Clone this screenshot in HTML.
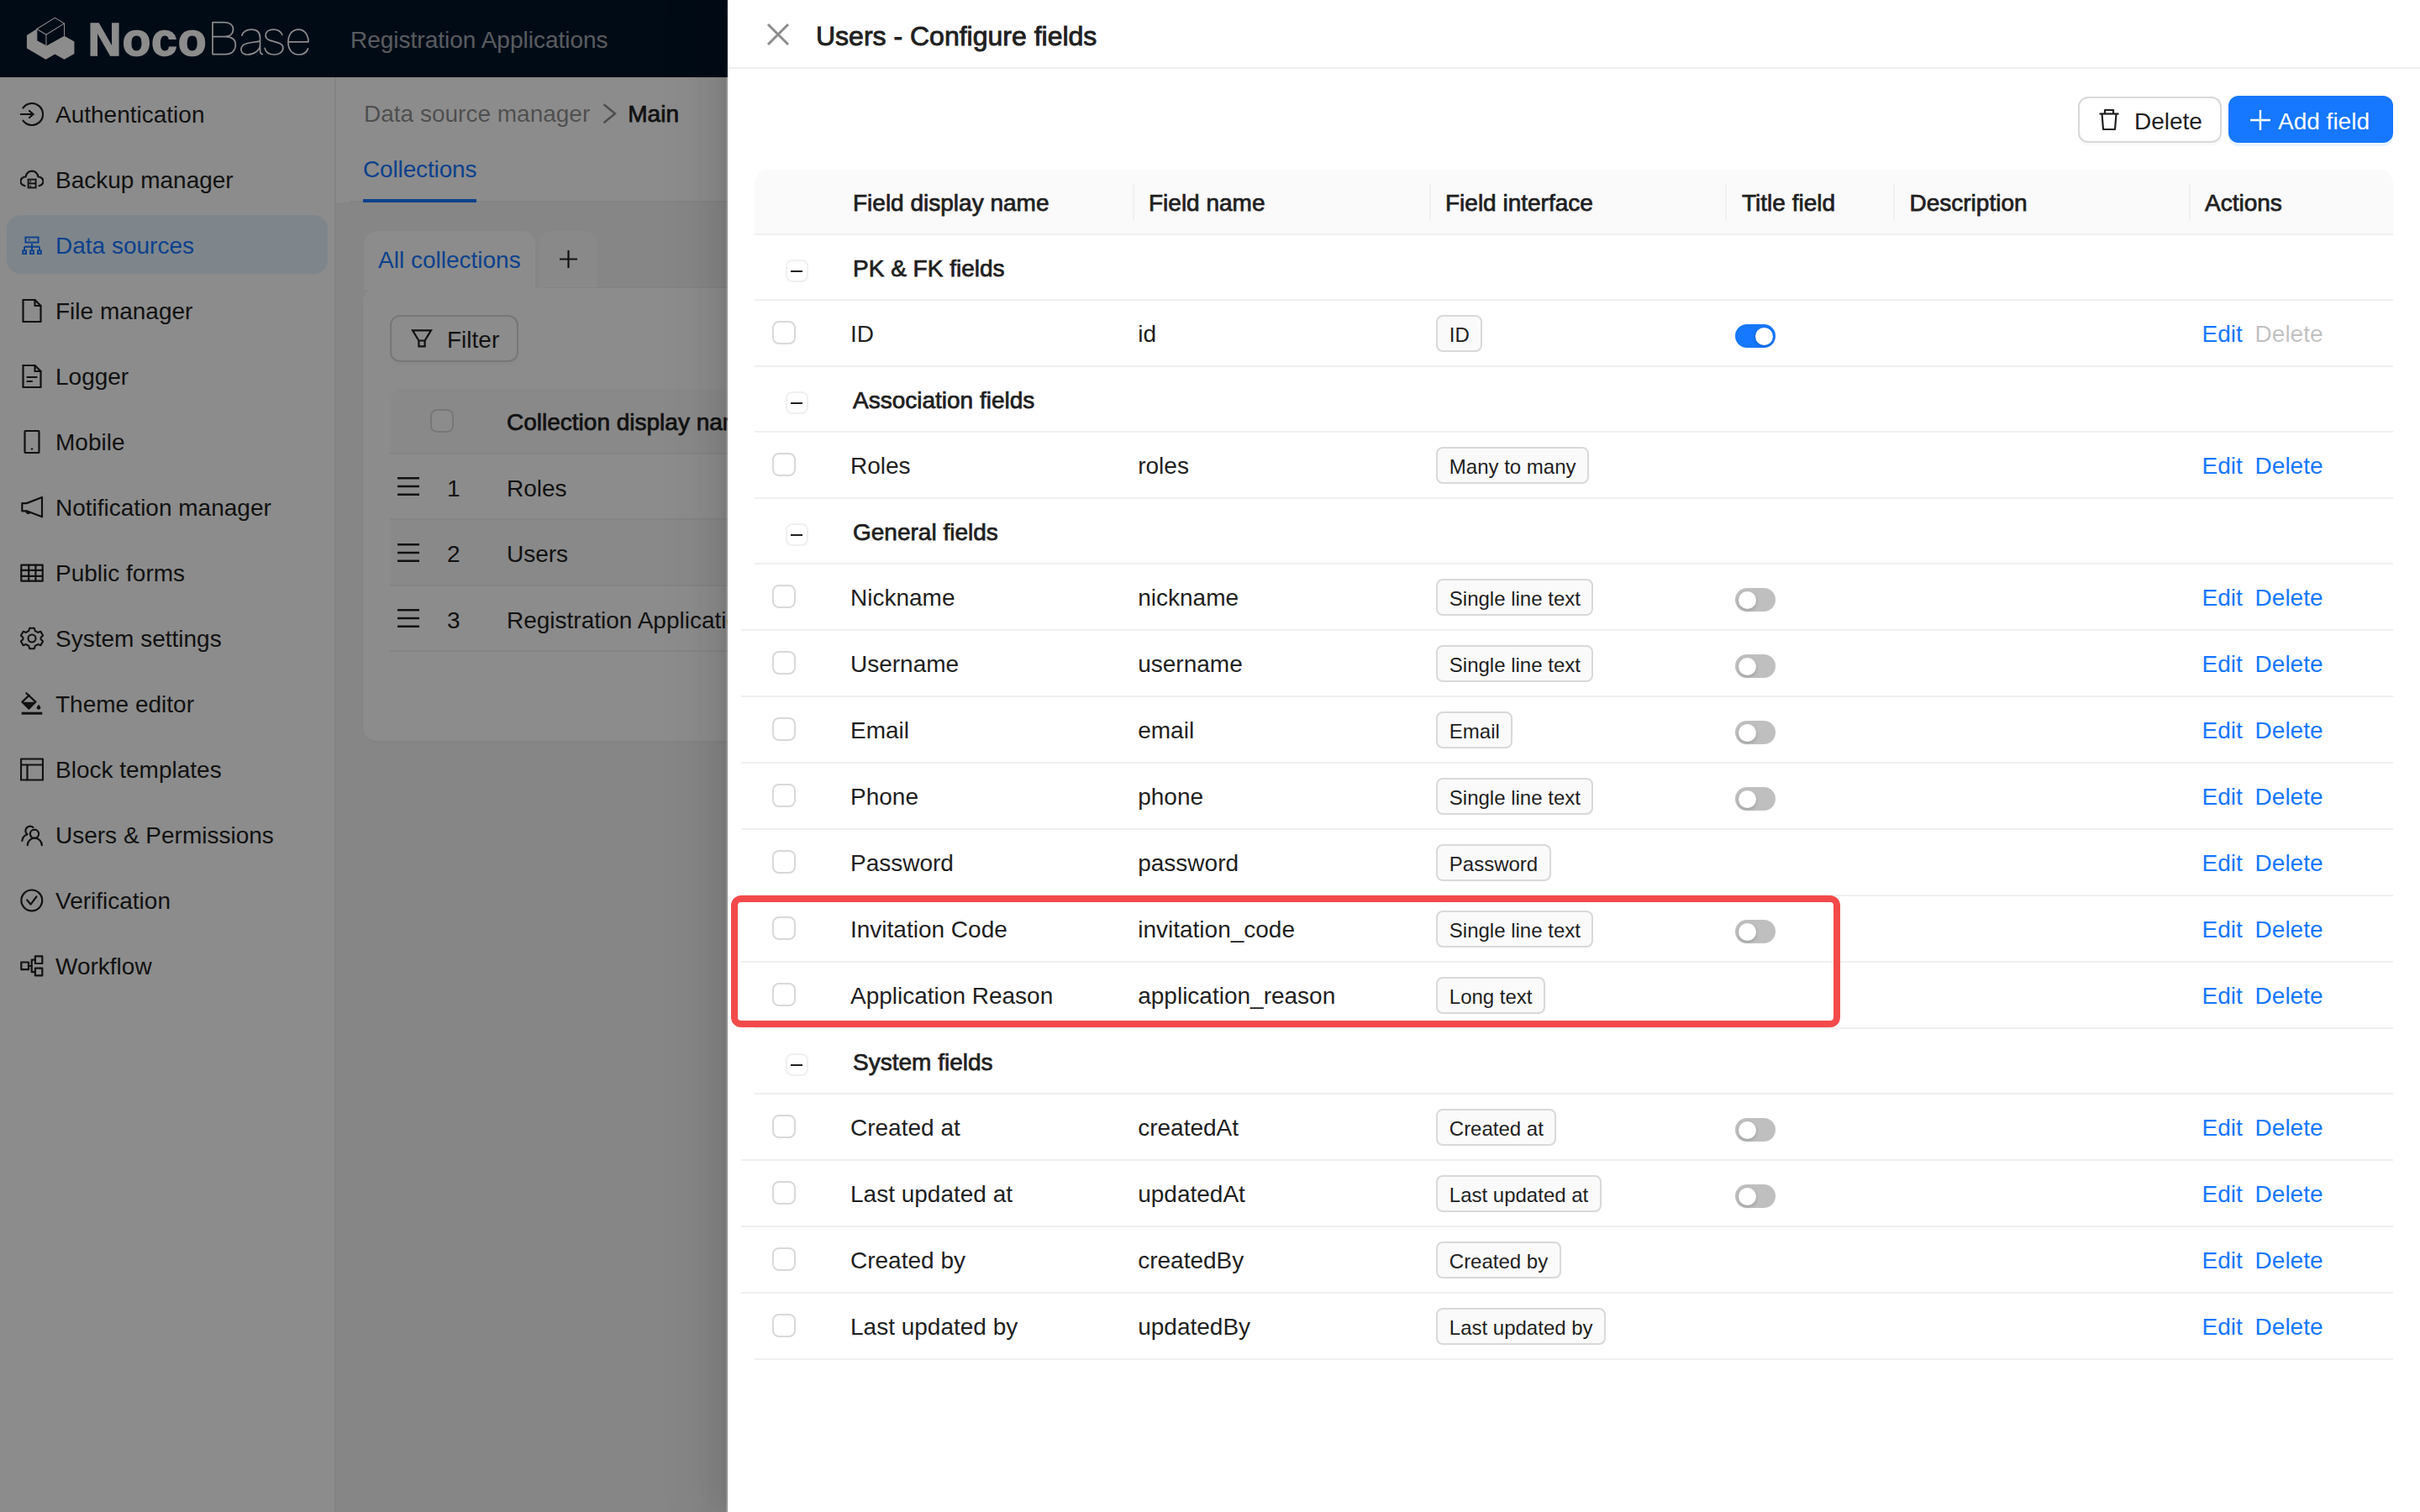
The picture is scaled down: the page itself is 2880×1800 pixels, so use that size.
<!DOCTYPE html>
<html><head><meta charset="utf-8"><title>NocoBase</title>
<style>
html,body{margin:0;padding:0;}
body{width:2880px;height:1800px;position:relative;overflow:hidden;background:#fff;font-family:'Liberation Sans',sans-serif;}
.t{position:absolute;white-space:nowrap;}
.b{position:absolute;box-sizing:border-box;}
</style></head><body>
<div class="b" style="left:0.0px;top:0.0px;width:866.0px;height:1800.0px;background:#f5f5f5;"></div><div class="b" style="left:0.0px;top:0.0px;width:866.0px;height:92.0px;background:#001529;"></div><svg class="b" style="left:20.0px;top:10.0px;" width="360" height="72" viewBox="0 0 2420 484"><polygon fill="#fff" points="80,215 160,165 160,260 235,300 380,220 460,265 460,363 380,408 305,366 232,408 80,320"/><g fill="none" stroke="#fff" stroke-width="7" stroke-linejoin="round"><polygon points="160,165 305,75 380,120 235,210"/><polyline points="160,165 160,260 235,300 235,210"/><polyline points="380,120 380,220"/></g></svg><div class="t" style="left:104.5px;top:20.2px;font-size:55.5px;line-height:55.5px;color:#fff;font-weight:bold;letter-spacing:0.8px;-webkit-text-stroke:1.4px #fff;">Noco</div><svg class="b" style="left:250.0px;top:20.0px;" width="130" height="52" viewBox="0 0 130 52"><g fill="none" stroke="#fff" stroke-width="1.8" stroke-linecap="round" stroke-linejoin="round" transform="translate(3,26) scale(0.942,0.95) translate(-4,-26)"><path d="M4,5.5 V45.5 H20 C28,45.5 33,41 33,34 C33,27 28,23.5 20,23.5 H4 M4,5.5 H19 C26,5.5 30,9 30,14.5 C30,20 26,23.5 19,23.5"/><path d="M41,22 C43,16.5 48,14.5 53,14.5 C60,14.5 64,18 64,25 V40 C64,44 65,45.5 67,45.5 M64,29 C58,30.5 52,30.5 47,32 C42,33.5 40,36 40,39.5 C40,43.5 43.5,46 48,46 C56,46 64,41 64,34"/><path d="M92,21 C90,16.5 86,14.5 81,14.5 C75,14.5 71,17.5 71,22 C71,32 93,27.5 93,37.5 C93,43 88,46 82,46 C76,46 71,43.5 70,38"/><path d="M100,30 H125 C125,21 120,14.5 112.5,14.5 C104.5,14.5 99.5,21 99.5,30.5 C99.5,40 104.5,46 113,46 C119,46 123,43 124.5,38.5"/></g></svg><div class="t" style="left:417.0px;top:34.1px;font-size:28px;line-height:28px;color:rgba(255,255,255,0.65);">Registration Applications</div><div class="b" style="left:0.0px;top:92.0px;width:400.0px;height:1708.0px;background:#fff;border-right:2px solid #f0f0f0;"></div><div class="b" style="left:8.0px;top:256.0px;width:382.0px;height:70.0px;background:#e6f4ff;border-radius:16px;"></div><svg class="b" style="left:24.0px;top:121.8px;" width="28" height="28" viewBox="-14 -14 28 28"><g fill="none" stroke="#1f1f1f" stroke-width="2.2" stroke-linecap="round" stroke-linejoin="round"><path d="M-10.5,-7.6 A13 13 0 1 1 -10.5,7.6"/><path d="M-14,0 H1.5"/><path d="M-3,-4 L1.5,0 L-3,4"/></g></svg><div class="t" style="left:66.0px;top:123.1px;font-size:28px;line-height:28px;color:#1f1f1f;">Authentication</div><svg class="b" style="left:24.0px;top:199.8px;" width="28" height="28" viewBox="-14 -14 28 28"><g fill="none" stroke="#1f1f1f" stroke-width="2.2" stroke-linecap="round" stroke-linejoin="round"><path d="M-8.5,7.2 C-11.5,6.5 -13.5,4.5 -13.5,2 C-13.5,-1 -11,-3.5 -7.5,-3.5 C-6.5,-7.5 -3.5,-10.3 0,-10.3 C3.5,-10.3 6.5,-7.5 7.5,-3.5 C11,-3.5 13.5,-1 13.5,2 C13.5,4.5 11.5,6.5 8.6,7.2"/></g><g fill="none" stroke="#1f1f1f" stroke-width="1.9"><rect x="-4.4" y="-0.35" width="9" height="9.8"/><path d="M-4.6,4.4 H4.7"/></g><circle cx="-1.7" cy="1.9" r="0.9" fill="#1f1f1f"/><circle cx="-1.7" cy="7.7" r="0.9" fill="#1f1f1f"/></svg><div class="t" style="left:66.0px;top:201.1px;font-size:28px;line-height:28px;color:#1f1f1f;">Backup manager</div><svg class="b" style="left:24.0px;top:277.8px;" width="28" height="28" viewBox="-14 -14 28 28"><g fill="none" stroke="#1677ff" stroke-width="1.9"><rect x="-7.6" y="-9.5" width="15.2" height="6.1"/><path d="M0,-2.1 V1.8 M-9,1.8 H9 M-9,1.8 V6.5 M0,1.8 V6.5 M9,1.8 V6.5"/><rect x="-10.8" y="6.4" width="3.8" height="3.7"/><rect x="-1.9" y="6.4" width="3.8" height="3.7"/><rect x="7" y="6.4" width="3.8" height="3.7"/></g><circle cx="-3.3" cy="-6.5" r="1" fill="#1677ff"/></svg><div class="t" style="left:66.0px;top:279.1px;font-size:28px;line-height:28px;color:#1677ff;">Data sources</div><svg class="b" style="left:24.0px;top:355.8px;" width="28" height="28" viewBox="-14 -14 28 28"><g fill="none" stroke="#1f1f1f" stroke-width="2.2" stroke-linecap="round" stroke-linejoin="round"><path d="M-10.5,-13 H3.5 L10.5,-6 V13 H-10.5 Z"/><path d="M3.5,-13 V-6 H10.5"/></g></svg><div class="t" style="left:66.0px;top:357.1px;font-size:28px;line-height:28px;color:#1f1f1f;">File manager</div><svg class="b" style="left:24.0px;top:433.8px;" width="28" height="28" viewBox="-14 -14 28 28"><g fill="none" stroke="#1f1f1f" stroke-width="2.2" stroke-linecap="round" stroke-linejoin="round"><path d="M-10.5,-13 H3.5 L10.5,-6 V13 H-10.5 Z"/><path d="M3.5,-13 V-6 H10.5"/><path d="M-5.5,1 H5.5 M-5.5,6 H0"/></g></svg><div class="t" style="left:66.0px;top:435.1px;font-size:28px;line-height:28px;color:#1f1f1f;">Logger</div><svg class="b" style="left:24.0px;top:511.8px;" width="28" height="28" viewBox="-14 -14 28 28"><g fill="none" stroke="#1f1f1f" stroke-width="2.2" stroke-linecap="round" stroke-linejoin="round"><rect x="-8.5" y="-13" width="17" height="26" rx="1"/><path d="M-0.3,8.5 H0.3"/></g></svg><div class="t" style="left:66.0px;top:513.1px;font-size:28px;line-height:28px;color:#1f1f1f;">Mobile</div><svg class="b" style="left:24.0px;top:589.8px;" width="28" height="28" viewBox="-14 -14 28 28"><g fill="none" stroke="#1f1f1f" stroke-width="2.2" stroke-linecap="round" stroke-linejoin="round"><path d="M-11.7,-4.9 H-6.3 L12,-12 V11.3 L-6.3,4.3 H-11.7 Z"/><path d="M-6.6,4.8 A2.3 2.3 0 0 0 -2.4,5.9"/></g></svg><div class="t" style="left:66.0px;top:591.1px;font-size:28px;line-height:28px;color:#1f1f1f;">Notification manager</div><svg class="b" style="left:24.0px;top:667.8px;" width="28" height="28" viewBox="-14 -14 28 28"><g fill="none" stroke="#1f1f1f" stroke-width="2.2" stroke-linecap="round" stroke-linejoin="round" stroke-linecap="butt" stroke-linejoin="miter"><rect x="-12.7" y="-9.3" width="25.4" height="19"/><path d="M-12.7,-3.1 H12.7 M-12.7,3.8 H12.7 M-3.8,-9.3 V9.7 M4.4,-9.3 V9.7"/></g></svg><div class="t" style="left:66.0px;top:669.1px;font-size:28px;line-height:28px;color:#1f1f1f;">Public forms</div><svg class="b" style="left:24.0px;top:745.8px;" width="28" height="28" viewBox="-14 -14 28 28"><g fill="none" stroke="#1f1f1f" stroke-width="2.2" stroke-linecap="round" stroke-linejoin="round" transform="scale(0.94)"><path d="M-3,-13 H3 L4,-9.5 L7.5,-7.5 L11,-8.7 L14,-3.5 L11.3,-1.3 V1.3 L14,3.5 L11,8.7 L7.5,7.5 L4,9.5 L3,13 H-3 L-4,9.5 L-7.5,7.5 L-11,8.7 L-14,3.5 L-11.3,1.3 V-1.3 L-14,-3.5 L-11,-8.7 L-7.5,-7.5 L-4,-9.5 Z"/><circle cx="0" cy="0" r="4.8"/></g></svg><div class="t" style="left:66.0px;top:747.1px;font-size:28px;line-height:28px;color:#1f1f1f;">System settings</div><svg class="b" style="left:24.0px;top:823.8px;" width="28" height="28" viewBox="-14 -14 28 28"><g fill="none" stroke="#1f1f1f" stroke-width="2.2" stroke-linecap="round" stroke-linejoin="round" stroke-linecap="butt" stroke-linejoin="miter"><path d="M-6.6,-12.8 L4.4,-2.4 L-3.5,5.6 L-11.6,-2.4 L-3.3,-10.2"/></g><path d="M-11,-2.2 H3.9 L-3.5,5.4 Z" fill="#1f1f1f"/><path d="M8,0.8 C9.5,2.6 10.3,3.8 10.3,4.6 C10.3,5.9 9.3,6.7 8,6.7 C6.7,6.7 5.7,5.9 5.7,4.6 C5.7,3.8 6.5,2.6 8,0.8 Z" fill="#1f1f1f"/><rect x="-12.3" y="9.7" width="24.6" height="3" fill="#1f1f1f"/></svg><div class="t" style="left:66.0px;top:825.1px;font-size:28px;line-height:28px;color:#1f1f1f;">Theme editor</div><svg class="b" style="left:24.0px;top:901.8px;" width="28" height="28" viewBox="-14 -14 28 28"><g fill="none" stroke="#1f1f1f" stroke-width="2.2" stroke-linecap="round" stroke-linejoin="round"><rect x="-13" y="-12.5" width="26" height="25"/><path d="M-13,-5.5 H13 M-5.5,-5.5 V12.5"/></g></svg><div class="t" style="left:66.0px;top:903.1px;font-size:28px;line-height:28px;color:#1f1f1f;">Block templates</div><svg class="b" style="left:24.0px;top:979.8px;" width="28" height="28" viewBox="-14 -14 28 28"><g fill="none" stroke="#1f1f1f" stroke-width="2.2" stroke-linecap="round" stroke-linejoin="round"><path d="M1.4,-9.1 A5.3 5.3 0 1 0 -5.7,-0.8"/><path d="M-5.7,-0.8 C-9,0.5 -11.2,3.5 -11.7,6.8"/><circle cx="3" cy="-1.2" r="5.1"/><path d="M-5.3,12.2 A8.55 8.55 0 0 1 11.8,12.2"/></g></svg><div class="t" style="left:66.0px;top:981.1px;font-size:28px;line-height:28px;color:#1f1f1f;">Users &amp; Permissions</div><svg class="b" style="left:24.0px;top:1057.8px;" width="28" height="28" viewBox="-14 -14 28 28"><g fill="none" stroke="#1f1f1f" stroke-width="2.2" stroke-linecap="round" stroke-linejoin="round"><circle cx="-0.2" cy="-0.1" r="12.4"/><path d="M-5.7,-0.5 L-1.5,4.6 L5.4,-4.5"/></g></svg><div class="t" style="left:66.0px;top:1059.1px;font-size:28px;line-height:28px;color:#1f1f1f;">Verification</div><svg class="b" style="left:24.0px;top:1135.8px;" width="28" height="28" viewBox="-14 -14 28 28"><g fill="none" stroke="#1f1f1f" stroke-width="2.2" stroke-linecap="round" stroke-linejoin="round"><rect x="-12.7" y="-4.5" width="8.7" height="8.7"/><rect x="3.9" y="-11.7" width="8.4" height="8.7"/><rect x="3.9" y="2.7" width="8.4" height="8.7"/><path d="M-4,0 H-0.3 M-0.3,-7.4 V7.2 M-0.3,-7.4 H3.9 M-0.3,7.2 H3.9"/></g></svg><div class="t" style="left:66.0px;top:1137.1px;font-size:28px;line-height:28px;color:#1f1f1f;">Workflow</div><div class="b" style="left:400.0px;top:92.0px;width:466.0px;height:149.0px;background:#fff;"></div><div class="t" style="left:433.0px;top:121.7px;font-size:28px;line-height:28px;color:rgba(0,0,0,0.45);">Data source manager</div><svg class="b" style="left:715.0px;top:122.0px;" width="20" height="28" viewBox="0 0 20 28"><path d="M3.5,2.2 L17,13.2 L3.5,24.2" fill="none" stroke="rgba(0,0,0,0.45)" stroke-width="2.4"/></svg><div class="t" style="left:747.3px;top:121.9px;font-size:28px;line-height:28px;color:#1f1f1f;-webkit-text-stroke:0.75px #1f1f1f;">Main</div><div class="t" style="left:432.0px;top:188.2px;font-size:28px;line-height:28px;color:#1677ff;letter-spacing:-0.14px;">Collections</div><div class="b" style="left:416.0px;top:239.0px;width:450.0px;height:2.0px;background:#f0f0f0;"></div><div class="b" style="left:432.0px;top:237.0px;width:135.0px;height:4.0px;background:#1677ff;"></div><div class="b" style="left:433.0px;top:274.5px;width:203.5px;height:70.0px;background:#fff;border-radius:16px 16px 0 0;"></div><div class="b" style="left:642.0px;top:274.5px;width:68.5px;height:68.0px;background:#fafafa;border-radius:16px 16px 0 0;"></div><div class="t" style="left:450.0px;top:296.2px;font-size:28px;line-height:28px;color:#1677ff;">All collections</div><svg class="b" style="left:665.0px;top:296.5px;" width="23" height="23" viewBox="0 0 23 23"><path d="M11.5,1 V22 M1,11.5 H22" stroke="#1f1f1f" stroke-width="2.2"/></svg><div class="b" style="left:643.0px;top:342.0px;width:223.0px;height:2.0px;background:#f0f0f0;"></div><div class="b" style="left:432.0px;top:343.0px;width:500.0px;height:538.5px;background:#fff;border-radius:16px;box-shadow:0 2px 4px rgba(0,0,0,0.04);"></div><div class="b" style="left:464.0px;top:375.0px;width:152.5px;height:55.5px;background:#fff;border:2px solid #d9d9d9;border-radius:12px;box-shadow:0 4px 0 rgba(0,0,0,0.02);"></div><svg class="b" style="left:489.0px;top:390.0px;" width="26" height="26" viewBox="0 0 26 26"><path d="M2,3.3 H24 L16.6,15.5 V22.4 H9.4 V15.5 Z M9.4,15.5 H16.6" fill="none" stroke="#1f1f1f" stroke-width="2.2" stroke-linejoin="miter"/></svg><div class="t" style="left:532.0px;top:391.0px;font-size:28px;line-height:28px;color:#1f1f1f;">Filter</div><div class="b" style="left:464.0px;top:463.0px;width:420.0px;height:77.5px;background:#fafafa;border-radius:16px 0 0 0;border-bottom:2px solid #f0f0f0;"></div><div class="b" style="left:512.0px;top:487.0px;width:28.0px;height:28.0px;background:#fff;border:2px solid #d9d9d9;border-radius:8px;"></div><div class="t" style="left:603.0px;top:488.8px;font-size:28px;line-height:28px;color:#1f1f1f;-webkit-text-stroke:0.75px #1f1f1f;">Collection display name</div><div class="b" style="left:464.0px;top:617.0px;width:420.0px;height:2.0px;background:#f0f0f0;"></div><svg class="b" style="left:473.0px;top:568.4px;" width="26" height="22" viewBox="0 0 26 22"><path d="M0,1.2 H26 M0,11 H26 M0,20.8 H26" stroke="#1f1f1f" stroke-width="2.4"/></svg><div class="t" style="left:532.0px;top:567.6px;font-size:28px;line-height:28px;color:#1f1f1f;">1</div><div class="t" style="left:603.0px;top:567.6px;font-size:28px;line-height:28px;color:#1f1f1f;">Roles</div><div class="b" style="left:464.0px;top:619.0px;width:420.0px;height:78.5px;background:#fafafa;"></div><div class="b" style="left:464.0px;top:695.5px;width:420.0px;height:2.0px;background:#f0f0f0;"></div><svg class="b" style="left:473.0px;top:646.9px;" width="26" height="22" viewBox="0 0 26 22"><path d="M0,1.2 H26 M0,11 H26 M0,20.8 H26" stroke="#1f1f1f" stroke-width="2.4"/></svg><div class="t" style="left:532.0px;top:646.1px;font-size:28px;line-height:28px;color:#1f1f1f;">2</div><div class="t" style="left:603.0px;top:646.1px;font-size:28px;line-height:28px;color:#1f1f1f;">Users</div><div class="b" style="left:464.0px;top:774.0px;width:420.0px;height:2.0px;background:#f0f0f0;"></div><svg class="b" style="left:473.0px;top:725.4px;" width="26" height="22" viewBox="0 0 26 22"><path d="M0,1.2 H26 M0,11 H26 M0,20.8 H26" stroke="#1f1f1f" stroke-width="2.4"/></svg><div class="t" style="left:532.0px;top:724.6px;font-size:28px;line-height:28px;color:#1f1f1f;">3</div><div class="t" style="left:603.0px;top:724.6px;font-size:28px;line-height:28px;color:#1f1f1f;">Registration Applications</div><div class="b" style="left:0.0px;top:0.0px;width:866.0px;height:1800.0px;background:rgba(0,0,0,0.45);"></div><div class="b" style="left:866.0px;top:0.0px;width:2014.0px;height:1800.0px;background:#fff;box-shadow:-12px 0 32px 0 rgba(0,0,0,0.08),-6px 0 12px -8px rgba(0,0,0,0.12),-18px 0 56px 16px rgba(0,0,0,0.05);"></div><div class="b" style="left:864.0px;top:0.0px;width:2.0px;height:92.0px;background:rgba(255,255,255,0.07);"></div><div class="b" style="left:864.0px;top:92.0px;width:2.0px;height:1708.0px;background:rgba(255,255,255,0.2);"></div><div class="b" style="left:866.0px;top:80.0px;width:2014.0px;height:2.0px;background:#f0f0f0;"></div><svg class="b" style="left:912.0px;top:27.0px;" width="28" height="28" viewBox="0 0 28 28"><path d="M2,2 L26,26 M26,2 L2,26" stroke="rgba(0,0,0,0.45)" stroke-width="3"/></svg><div class="t" style="left:971.0px;top:26.6px;font-size:32px;line-height:32px;color:#1f1f1f;-webkit-text-stroke:0.9px #1f1f1f;">Users - Configure fields</div><div class="b" style="left:2472.5px;top:114.5px;width:171.0px;height:55.0px;background:#fff;border:2px solid #d9d9d9;border-radius:12px;box-shadow:0 4px 0 rgba(0,0,0,0.02);"></div><svg class="b" style="left:2496.0px;top:128.0px;" width="28" height="28" viewBox="0 0 28 28"><g fill="none" stroke="#1f1f1f" stroke-width="2.2" stroke-linejoin="round"><path d="M2.5,7.5 H25.5"/><path d="M9,7.5 V3 H19 V7.5"/><path d="M5.5,7.5 L7,26 H21 L22.5,7.5"/></g></svg><div class="t" style="left:2540.0px;top:130.8px;font-size:28px;line-height:28px;color:#1f1f1f;">Delete</div><div class="b" style="left:2651.5px;top:113.5px;width:196.5px;height:56.5px;background:#1677ff;border-radius:12px;box-shadow:0 4px 0 rgba(5,145,255,0.1);"></div><svg class="b" style="left:2677.0px;top:130.0px;" width="26" height="26" viewBox="0 0 26 26"><path d="M13,1 V25 M1,13 H25" stroke="#fff" stroke-width="2.4"/></svg><div class="t" style="left:2711.0px;top:130.8px;font-size:28px;line-height:28px;color:#fff;">Add field</div><div class="b" style="left:898.0px;top:202.0px;width:1950.0px;height:78.0px;background:#fafafa;border-radius:16px 16px 0 0;border-bottom:2px solid #f0f0f0;"></div><div class="b" style="left:1347.6px;top:218.5px;width:2.0px;height:43.5px;background:#f0f0f0;"></div><div class="b" style="left:1700.8px;top:218.5px;width:2.0px;height:43.5px;background:#f0f0f0;"></div><div class="b" style="left:2053.0px;top:218.5px;width:2.0px;height:43.5px;background:#f0f0f0;"></div><div class="b" style="left:2253.0px;top:218.5px;width:2.0px;height:43.5px;background:#f0f0f0;"></div><div class="b" style="left:2604.8px;top:218.5px;width:2.0px;height:43.5px;background:#f0f0f0;"></div><div class="t" style="left:1015.0px;top:228.0px;font-size:28px;line-height:28px;color:#1f1f1f;-webkit-text-stroke:0.75px #1f1f1f;">Field display name</div><div class="t" style="left:1367.0px;top:228.0px;font-size:28px;line-height:28px;color:#1f1f1f;-webkit-text-stroke:0.75px #1f1f1f;">Field name</div><div class="t" style="left:1720.0px;top:228.0px;font-size:28px;line-height:28px;color:#1f1f1f;-webkit-text-stroke:0.75px #1f1f1f;">Field interface</div><div class="t" style="left:2073.0px;top:228.0px;font-size:28px;line-height:28px;color:#1f1f1f;-webkit-text-stroke:0.75px #1f1f1f;">Title field</div><div class="t" style="left:2272.5px;top:228.0px;font-size:28px;line-height:28px;color:#1f1f1f;-webkit-text-stroke:0.75px #1f1f1f;">Description</div><div class="t" style="left:2624.0px;top:228.0px;font-size:28px;line-height:28px;color:#1f1f1f;-webkit-text-stroke:0.75px #1f1f1f;">Actions</div><div class="b" style="left:898.0px;top:356.0px;width:1950.0px;height:2.0px;background:#f0f0f0;"></div><div class="b" style="left:934.5px;top:309.3px;width:27.0px;height:27.0px;background:#fff;border:2px solid #f0f0f0;border-radius:8px;"></div><div class="b" style="left:941.0px;top:322.0px;width:14.0px;height:2.4px;background:#1f1f1f;"></div><div class="t" style="left:1015.0px;top:305.8px;font-size:28px;line-height:28px;color:#1f1f1f;-webkit-text-stroke:0.75px #1f1f1f;">PK &amp; FK fields</div><div class="b" style="left:898.0px;top:435.0px;width:1950.0px;height:2.0px;background:#f0f0f0;"></div><div class="b" style="left:918.5px;top:382.2px;width:28.0px;height:28.0px;background:#fff;border:2px solid #d9d9d9;border-radius:8px;"></div><div class="t" style="left:1012.0px;top:384.4px;font-size:28px;line-height:28px;color:#1f1f1f;">ID</div><div class="t" style="left:1354.2px;top:384.4px;font-size:28px;line-height:28px;color:#1f1f1f;">id</div><div class="b" style="left:1709.3px;top:375.3px;height:44px;padding:0 13.5px;border:2px solid #d9d9d9;border-radius:8px;background:#fafafa;font-size:24px;line-height:43.9px;color:#1f1f1f;white-space:nowrap;">ID</div><div class="b" style="left:2065.0px;top:386.0px;width:48.0px;height:28.0px;background:#1677ff;border-radius:14px;"></div><div class="b" style="left:2088.5px;top:389.5px;width:21.0px;height:21.0px;background:#fff;border-radius:50%;box-shadow:0 2px 4px rgba(0,35,11,0.2);"></div><div class="t" style="left:2620.6px;top:384.4px;font-size:28px;line-height:28px;color:#1677ff;">Edit</div><div class="t" style="left:2683.6px;top:384.4px;font-size:28px;line-height:28px;color:rgba(0,0,0,0.25);">Delete</div><div class="b" style="left:898.0px;top:513.0px;width:1950.0px;height:2.0px;background:#f0f0f0;"></div><div class="b" style="left:934.5px;top:466.3px;width:27.0px;height:27.0px;background:#fff;border:2px solid #f0f0f0;border-radius:8px;"></div><div class="b" style="left:941.0px;top:479.0px;width:14.0px;height:2.4px;background:#1f1f1f;"></div><div class="t" style="left:1015.0px;top:462.8px;font-size:28px;line-height:28px;color:#1f1f1f;-webkit-text-stroke:0.75px #1f1f1f;">Association fields</div><div class="b" style="left:898.0px;top:592.0px;width:1950.0px;height:2.0px;background:#f0f0f0;"></div><div class="b" style="left:918.5px;top:539.2px;width:28.0px;height:28.0px;background:#fff;border:2px solid #d9d9d9;border-radius:8px;"></div><div class="t" style="left:1012.0px;top:541.4px;font-size:28px;line-height:28px;color:#1f1f1f;">Roles</div><div class="t" style="left:1354.2px;top:541.4px;font-size:28px;line-height:28px;color:#1f1f1f;">roles</div><div class="b" style="left:1709.3px;top:532.3px;height:44px;padding:0 13.5px;border:2px solid #d9d9d9;border-radius:8px;background:#fafafa;font-size:24px;line-height:43.9px;color:#1f1f1f;white-space:nowrap;">Many to many</div><div class="t" style="left:2620.6px;top:541.4px;font-size:28px;line-height:28px;color:#1677ff;">Edit</div><div class="t" style="left:2683.6px;top:541.4px;font-size:28px;line-height:28px;color:#1677ff;">Delete</div><div class="b" style="left:898.0px;top:670.0px;width:1950.0px;height:2.0px;background:#f0f0f0;"></div><div class="b" style="left:934.5px;top:623.3px;width:27.0px;height:27.0px;background:#fff;border:2px solid #f0f0f0;border-radius:8px;"></div><div class="b" style="left:941.0px;top:636.0px;width:14.0px;height:2.4px;background:#1f1f1f;"></div><div class="t" style="left:1015.0px;top:619.8px;font-size:28px;line-height:28px;color:#1f1f1f;-webkit-text-stroke:0.75px #1f1f1f;">General fields</div><div class="b" style="left:882.0px;top:749.0px;width:1966.0px;height:2.0px;background:#f0f0f0;"></div><div class="b" style="left:918.5px;top:696.2px;width:28.0px;height:28.0px;background:#fff;border:2px solid #d9d9d9;border-radius:8px;"></div><div class="t" style="left:1012.0px;top:698.4px;font-size:28px;line-height:28px;color:#1f1f1f;">Nickname</div><div class="t" style="left:1354.2px;top:698.4px;font-size:28px;line-height:28px;color:#1f1f1f;">nickname</div><div class="b" style="left:1709.3px;top:689.3px;height:44px;padding:0 13.5px;border:2px solid #d9d9d9;border-radius:8px;background:#fafafa;font-size:24px;line-height:43.9px;color:#1f1f1f;white-space:nowrap;">Single line text</div><div class="b" style="left:2065.0px;top:700.0px;width:48.0px;height:28.0px;background:rgba(0,0,0,0.25);border-radius:14px;"></div><div class="b" style="left:2068.5px;top:703.5px;width:21.0px;height:21.0px;background:#fff;border-radius:50%;box-shadow:0 2px 4px rgba(0,35,11,0.2);"></div><div class="t" style="left:2620.6px;top:698.4px;font-size:28px;line-height:28px;color:#1677ff;">Edit</div><div class="t" style="left:2683.6px;top:698.4px;font-size:28px;line-height:28px;color:#1677ff;">Delete</div><div class="b" style="left:882.0px;top:828.0px;width:1966.0px;height:2.0px;background:#f0f0f0;"></div><div class="b" style="left:918.5px;top:775.2px;width:28.0px;height:28.0px;background:#fff;border:2px solid #d9d9d9;border-radius:8px;"></div><div class="t" style="left:1012.0px;top:777.4px;font-size:28px;line-height:28px;color:#1f1f1f;">Username</div><div class="t" style="left:1354.2px;top:777.4px;font-size:28px;line-height:28px;color:#1f1f1f;">username</div><div class="b" style="left:1709.3px;top:768.3px;height:44px;padding:0 13.5px;border:2px solid #d9d9d9;border-radius:8px;background:#fafafa;font-size:24px;line-height:43.9px;color:#1f1f1f;white-space:nowrap;">Single line text</div><div class="b" style="left:2065.0px;top:779.0px;width:48.0px;height:28.0px;background:rgba(0,0,0,0.25);border-radius:14px;"></div><div class="b" style="left:2068.5px;top:782.5px;width:21.0px;height:21.0px;background:#fff;border-radius:50%;box-shadow:0 2px 4px rgba(0,35,11,0.2);"></div><div class="t" style="left:2620.6px;top:777.4px;font-size:28px;line-height:28px;color:#1677ff;">Edit</div><div class="t" style="left:2683.6px;top:777.4px;font-size:28px;line-height:28px;color:#1677ff;">Delete</div><div class="b" style="left:882.0px;top:907.0px;width:1966.0px;height:2.0px;background:#f0f0f0;"></div><div class="b" style="left:918.5px;top:854.2px;width:28.0px;height:28.0px;background:#fff;border:2px solid #d9d9d9;border-radius:8px;"></div><div class="t" style="left:1012.0px;top:856.4px;font-size:28px;line-height:28px;color:#1f1f1f;">Email</div><div class="t" style="left:1354.2px;top:856.4px;font-size:28px;line-height:28px;color:#1f1f1f;">email</div><div class="b" style="left:1709.3px;top:847.3px;height:44px;padding:0 13.5px;border:2px solid #d9d9d9;border-radius:8px;background:#fafafa;font-size:24px;line-height:43.9px;color:#1f1f1f;white-space:nowrap;">Email</div><div class="b" style="left:2065.0px;top:858.0px;width:48.0px;height:28.0px;background:rgba(0,0,0,0.25);border-radius:14px;"></div><div class="b" style="left:2068.5px;top:861.5px;width:21.0px;height:21.0px;background:#fff;border-radius:50%;box-shadow:0 2px 4px rgba(0,35,11,0.2);"></div><div class="t" style="left:2620.6px;top:856.4px;font-size:28px;line-height:28px;color:#1677ff;">Edit</div><div class="t" style="left:2683.6px;top:856.4px;font-size:28px;line-height:28px;color:#1677ff;">Delete</div><div class="b" style="left:882.0px;top:986.0px;width:1966.0px;height:2.0px;background:#f0f0f0;"></div><div class="b" style="left:918.5px;top:933.2px;width:28.0px;height:28.0px;background:#fff;border:2px solid #d9d9d9;border-radius:8px;"></div><div class="t" style="left:1012.0px;top:935.4px;font-size:28px;line-height:28px;color:#1f1f1f;">Phone</div><div class="t" style="left:1354.2px;top:935.4px;font-size:28px;line-height:28px;color:#1f1f1f;">phone</div><div class="b" style="left:1709.3px;top:926.3px;height:44px;padding:0 13.5px;border:2px solid #d9d9d9;border-radius:8px;background:#fafafa;font-size:24px;line-height:43.9px;color:#1f1f1f;white-space:nowrap;">Single line text</div><div class="b" style="left:2065.0px;top:937.0px;width:48.0px;height:28.0px;background:rgba(0,0,0,0.25);border-radius:14px;"></div><div class="b" style="left:2068.5px;top:940.5px;width:21.0px;height:21.0px;background:#fff;border-radius:50%;box-shadow:0 2px 4px rgba(0,35,11,0.2);"></div><div class="t" style="left:2620.6px;top:935.4px;font-size:28px;line-height:28px;color:#1677ff;">Edit</div><div class="t" style="left:2683.6px;top:935.4px;font-size:28px;line-height:28px;color:#1677ff;">Delete</div><div class="b" style="left:882.0px;top:1065.0px;width:1966.0px;height:2.0px;background:#f0f0f0;"></div><div class="b" style="left:918.5px;top:1012.2px;width:28.0px;height:28.0px;background:#fff;border:2px solid #d9d9d9;border-radius:8px;"></div><div class="t" style="left:1012.0px;top:1014.4px;font-size:28px;line-height:28px;color:#1f1f1f;">Password</div><div class="t" style="left:1354.2px;top:1014.4px;font-size:28px;line-height:28px;color:#1f1f1f;">password</div><div class="b" style="left:1709.3px;top:1005.3px;height:44px;padding:0 13.5px;border:2px solid #d9d9d9;border-radius:8px;background:#fafafa;font-size:24px;line-height:43.9px;color:#1f1f1f;white-space:nowrap;">Password</div><div class="t" style="left:2620.6px;top:1014.4px;font-size:28px;line-height:28px;color:#1677ff;">Edit</div><div class="t" style="left:2683.6px;top:1014.4px;font-size:28px;line-height:28px;color:#1677ff;">Delete</div><div class="b" style="left:882.0px;top:1144.0px;width:1966.0px;height:2.0px;background:#f0f0f0;"></div><div class="b" style="left:918.5px;top:1091.2px;width:28.0px;height:28.0px;background:#fff;border:2px solid #d9d9d9;border-radius:8px;"></div><div class="t" style="left:1012.0px;top:1093.4px;font-size:28px;line-height:28px;color:#1f1f1f;">Invitation Code</div><div class="t" style="left:1354.2px;top:1093.4px;font-size:28px;line-height:28px;color:#1f1f1f;">invitation_code</div><div class="b" style="left:1709.3px;top:1084.3px;height:44px;padding:0 13.5px;border:2px solid #d9d9d9;border-radius:8px;background:#fafafa;font-size:24px;line-height:43.9px;color:#1f1f1f;white-space:nowrap;">Single line text</div><div class="b" style="left:2065.0px;top:1095.0px;width:48.0px;height:28.0px;background:rgba(0,0,0,0.25);border-radius:14px;"></div><div class="b" style="left:2068.5px;top:1098.5px;width:21.0px;height:21.0px;background:#fff;border-radius:50%;box-shadow:0 2px 4px rgba(0,35,11,0.2);"></div><div class="t" style="left:2620.6px;top:1093.4px;font-size:28px;line-height:28px;color:#1677ff;">Edit</div><div class="t" style="left:2683.6px;top:1093.4px;font-size:28px;line-height:28px;color:#1677ff;">Delete</div><div class="b" style="left:898.0px;top:1223.0px;width:1950.0px;height:2.0px;background:#f0f0f0;"></div><div class="b" style="left:918.5px;top:1170.2px;width:28.0px;height:28.0px;background:#fff;border:2px solid #d9d9d9;border-radius:8px;"></div><div class="t" style="left:1012.0px;top:1172.4px;font-size:28px;line-height:28px;color:#1f1f1f;">Application Reason</div><div class="t" style="left:1354.2px;top:1172.4px;font-size:28px;line-height:28px;color:#1f1f1f;">application_reason</div><div class="b" style="left:1709.3px;top:1163.3px;height:44px;padding:0 13.5px;border:2px solid #d9d9d9;border-radius:8px;background:#fafafa;font-size:24px;line-height:43.9px;color:#1f1f1f;white-space:nowrap;">Long text</div><div class="t" style="left:2620.6px;top:1172.4px;font-size:28px;line-height:28px;color:#1677ff;">Edit</div><div class="t" style="left:2683.6px;top:1172.4px;font-size:28px;line-height:28px;color:#1677ff;">Delete</div><div class="b" style="left:898.0px;top:1301.0px;width:1950.0px;height:2.0px;background:#f0f0f0;"></div><div class="b" style="left:934.5px;top:1254.3px;width:27.0px;height:27.0px;background:#fff;border:2px solid #f0f0f0;border-radius:8px;"></div><div class="b" style="left:941.0px;top:1267.0px;width:14.0px;height:2.4px;background:#1f1f1f;"></div><div class="t" style="left:1015.0px;top:1250.8px;font-size:28px;line-height:28px;color:#1f1f1f;-webkit-text-stroke:0.75px #1f1f1f;">System fields</div><div class="b" style="left:882.0px;top:1380.0px;width:1966.0px;height:2.0px;background:#f0f0f0;"></div><div class="b" style="left:918.5px;top:1327.2px;width:28.0px;height:28.0px;background:#fff;border:2px solid #d9d9d9;border-radius:8px;"></div><div class="t" style="left:1012.0px;top:1329.4px;font-size:28px;line-height:28px;color:#1f1f1f;">Created at</div><div class="t" style="left:1354.2px;top:1329.4px;font-size:28px;line-height:28px;color:#1f1f1f;">createdAt</div><div class="b" style="left:1709.3px;top:1320.3px;height:44px;padding:0 13.5px;border:2px solid #d9d9d9;border-radius:8px;background:#fafafa;font-size:24px;line-height:43.9px;color:#1f1f1f;white-space:nowrap;">Created at</div><div class="b" style="left:2065.0px;top:1331.0px;width:48.0px;height:28.0px;background:rgba(0,0,0,0.25);border-radius:14px;"></div><div class="b" style="left:2068.5px;top:1334.5px;width:21.0px;height:21.0px;background:#fff;border-radius:50%;box-shadow:0 2px 4px rgba(0,35,11,0.2);"></div><div class="t" style="left:2620.6px;top:1329.4px;font-size:28px;line-height:28px;color:#1677ff;">Edit</div><div class="t" style="left:2683.6px;top:1329.4px;font-size:28px;line-height:28px;color:#1677ff;">Delete</div><div class="b" style="left:882.0px;top:1459.0px;width:1966.0px;height:2.0px;background:#f0f0f0;"></div><div class="b" style="left:918.5px;top:1406.2px;width:28.0px;height:28.0px;background:#fff;border:2px solid #d9d9d9;border-radius:8px;"></div><div class="t" style="left:1012.0px;top:1408.4px;font-size:28px;line-height:28px;color:#1f1f1f;">Last updated at</div><div class="t" style="left:1354.2px;top:1408.4px;font-size:28px;line-height:28px;color:#1f1f1f;">updatedAt</div><div class="b" style="left:1709.3px;top:1399.3px;height:44px;padding:0 13.5px;border:2px solid #d9d9d9;border-radius:8px;background:#fafafa;font-size:24px;line-height:43.9px;color:#1f1f1f;white-space:nowrap;">Last updated at</div><div class="b" style="left:2065.0px;top:1410.0px;width:48.0px;height:28.0px;background:rgba(0,0,0,0.25);border-radius:14px;"></div><div class="b" style="left:2068.5px;top:1413.5px;width:21.0px;height:21.0px;background:#fff;border-radius:50%;box-shadow:0 2px 4px rgba(0,35,11,0.2);"></div><div class="t" style="left:2620.6px;top:1408.4px;font-size:28px;line-height:28px;color:#1677ff;">Edit</div><div class="t" style="left:2683.6px;top:1408.4px;font-size:28px;line-height:28px;color:#1677ff;">Delete</div><div class="b" style="left:882.0px;top:1538.0px;width:1966.0px;height:2.0px;background:#f0f0f0;"></div><div class="b" style="left:918.5px;top:1485.2px;width:28.0px;height:28.0px;background:#fff;border:2px solid #d9d9d9;border-radius:8px;"></div><div class="t" style="left:1012.0px;top:1487.4px;font-size:28px;line-height:28px;color:#1f1f1f;">Created by</div><div class="t" style="left:1354.2px;top:1487.4px;font-size:28px;line-height:28px;color:#1f1f1f;">createdBy</div><div class="b" style="left:1709.3px;top:1478.3px;height:44px;padding:0 13.5px;border:2px solid #d9d9d9;border-radius:8px;background:#fafafa;font-size:24px;line-height:43.9px;color:#1f1f1f;white-space:nowrap;">Created by</div><div class="t" style="left:2620.6px;top:1487.4px;font-size:28px;line-height:28px;color:#1677ff;">Edit</div><div class="t" style="left:2683.6px;top:1487.4px;font-size:28px;line-height:28px;color:#1677ff;">Delete</div><div class="b" style="left:898.0px;top:1617.0px;width:1950.0px;height:2.0px;background:#f0f0f0;"></div><div class="b" style="left:918.5px;top:1564.2px;width:28.0px;height:28.0px;background:#fff;border:2px solid #d9d9d9;border-radius:8px;"></div><div class="t" style="left:1012.0px;top:1566.4px;font-size:28px;line-height:28px;color:#1f1f1f;">Last updated by</div><div class="t" style="left:1354.2px;top:1566.4px;font-size:28px;line-height:28px;color:#1f1f1f;">updatedBy</div><div class="b" style="left:1709.3px;top:1557.3px;height:44px;padding:0 13.5px;border:2px solid #d9d9d9;border-radius:8px;background:#fafafa;font-size:24px;line-height:43.9px;color:#1f1f1f;white-space:nowrap;">Last updated by</div><div class="t" style="left:2620.6px;top:1566.4px;font-size:28px;line-height:28px;color:#1677ff;">Edit</div><div class="t" style="left:2683.6px;top:1566.4px;font-size:28px;line-height:28px;color:#1677ff;">Delete</div><div class="b" style="left:870.0px;top:1066.0px;width:1320.0px;height:157.3px;border:8px solid #f24a4a;border-radius:12px;"></div></body></html>
